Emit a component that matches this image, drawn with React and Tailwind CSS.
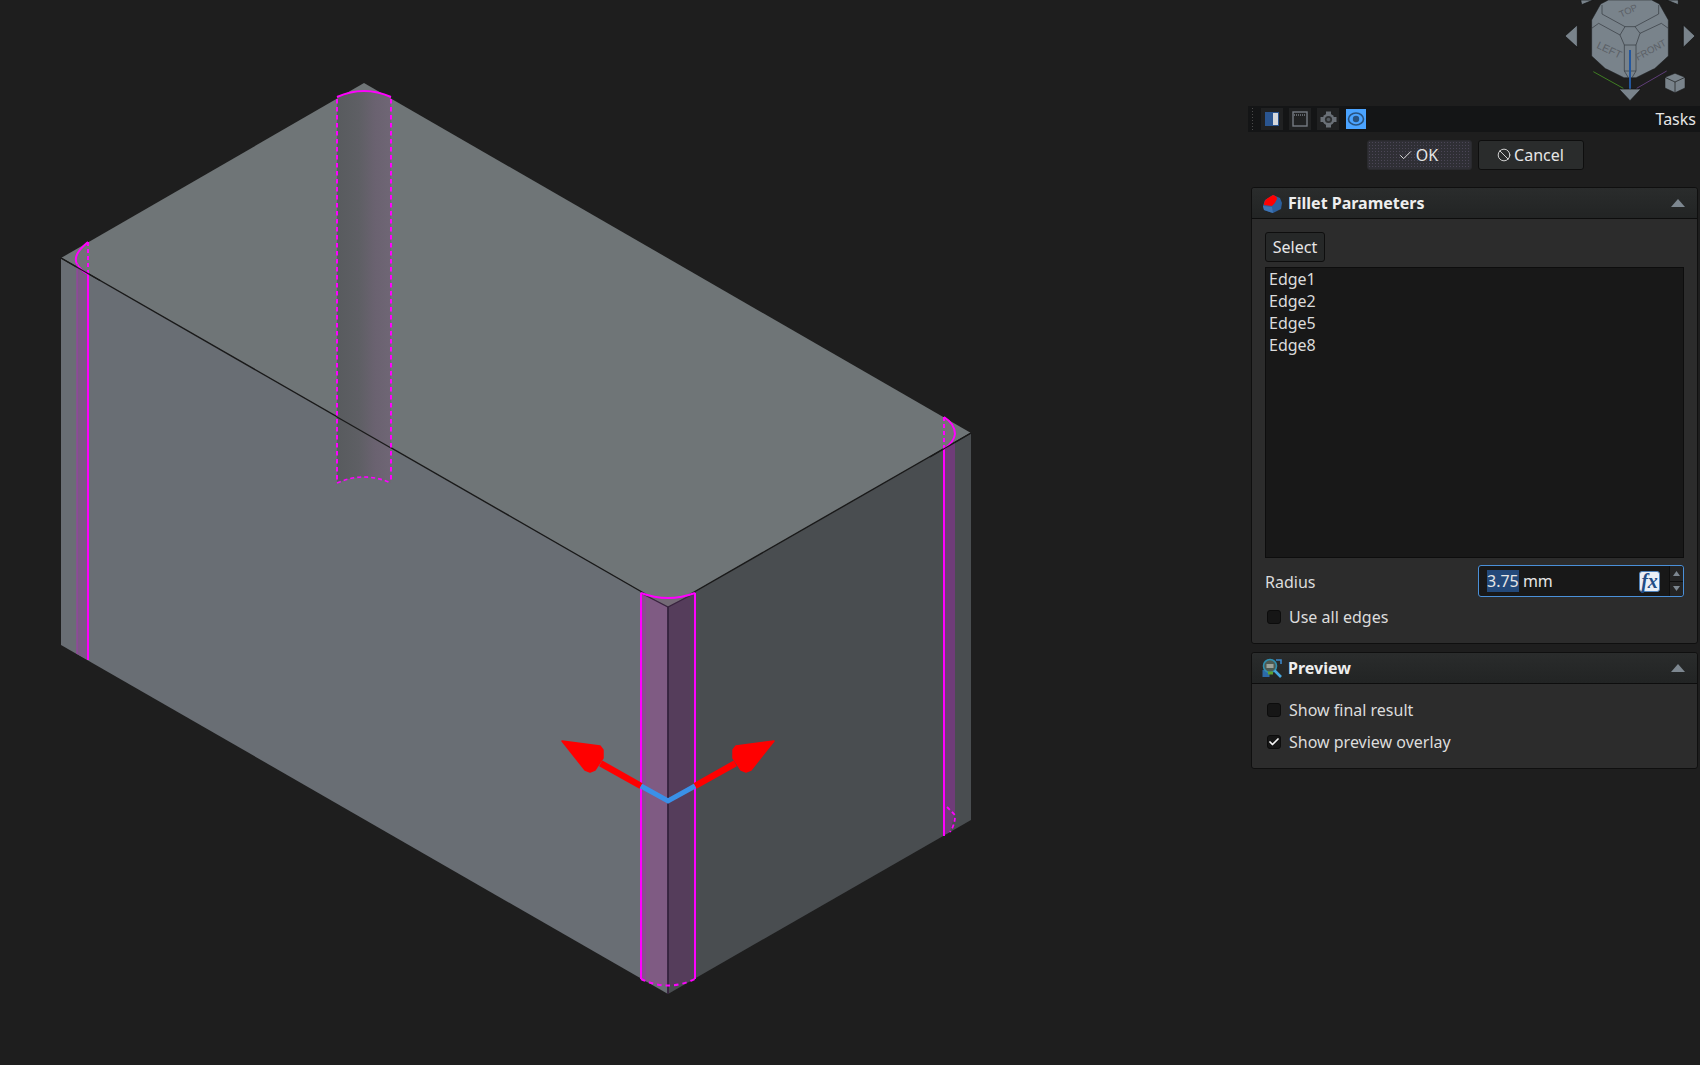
import React from "react";
import { Check, Ban } from "lucide-react";

const FONT = "font-['Noto_Sans',sans-serif]";

function ModelView() {
  return (
    <svg className="block w-[1250px] h-[1065px]" viewBox="0 0 1250 1065">
      <defs>
        <linearGradient id="backStrip" x1="0" x2="1" y1="0" y2="0">
          <stop offset="0" stopColor="#585b5e" />
          <stop offset="0.4" stopColor="#5e5f64" />
          <stop offset="0.7" stopColor="#6a6270" />
          <stop offset="1" stopColor="#6f6675" />
        </linearGradient>
      </defs>
      <polygon points="364,83 971,433 668,607 61,258" fill="#6f7577" />
      <polygon points="61,258 668,607 668,994 61,645" fill="#696e74" />
      <polygon points="668,607 971,433 971,820 668,994" fill="#494d50" />
      <line x1="61" y1="258" x2="668" y2="607" stroke="#1a1a1a" strokeWidth="1.4" />
      <line x1="668" y1="607" x2="971" y2="433" stroke="#1a1a1a" strokeWidth="1.4" />

      {/* back fillet */}
      <path d="M337 97 Q364 85 391 97 L391 483 Q364 471 337 483 Z" fill="url(#backStrip)" />
      <line x1="337" y1="417" x2="391" y2="448" stroke="#1a1a1a" strokeWidth="1.4" />
      <path d="M337 97 Q364 85 391 97" fill="none" stroke="#ff00ff" strokeWidth="2" />
      <path d="M337 483 Q364 471 391 483" fill="none" stroke="#ff00ff" strokeWidth="1.6" strokeDasharray="4 3" />
      <line x1="337" y1="99" x2="337" y2="483" stroke="#ff00ff" strokeWidth="2" strokeDasharray="4.5 3.5" />
      <line x1="391" y1="99" x2="391" y2="483" stroke="#ff00ff" strokeWidth="2" strokeDasharray="4.5 3.5" />

      {/* left fillet */}
      <path d="M88 274 Q77 266 77 258 L77 654 L88 660 Z" fill="#7b5884" />
      <path d="M88 242 Q72 255 77 264 Q80 270 88 274 Z" fill="#727078" />
      <path d="M88 242 Q72 255 77 264 Q80 270 88 274" fill="none" stroke="#ff00ff" strokeWidth="2" />
      <line x1="88" y1="242" x2="88" y2="274" stroke="#ff00ff" strokeWidth="2" strokeDasharray="4 3" />
      <line x1="88" y1="274" x2="88" y2="660" stroke="#ff00ff" strokeWidth="2" />
      <line x1="77" y1="264" x2="77" y2="654" stroke="#a03aaa" strokeWidth="1" />
      <line x1="61" y1="258" x2="100" y2="280.5" stroke="#1a1a1a" strokeWidth="1.4" />

      {/* right fillet */}
      <path d="M944 449 L955 442 L955 812 L950 832 L944 835 Z" fill="#6f3c78" />
      <path d="M944 417 Q955 424 955 434 Q954 442 944 449 Z" fill="#777078" />
      <path d="M944 417 Q955 424 955 434 Q954 442 944 449" fill="none" stroke="#ff00ff" strokeWidth="2" />
      <line x1="944" y1="417" x2="944" y2="448" stroke="#ff00ff" strokeWidth="2" strokeDasharray="4 3" />
      <line x1="944" y1="448" x2="944" y2="836" stroke="#ff00ff" strokeWidth="2" />
      <line x1="930" y1="457" x2="971" y2="433" stroke="#1a1a1a" strokeWidth="1.4" />
      <path d="M947 807 L955 815 Q955 825 950 832" fill="none" stroke="#ff00ff" strokeWidth="1.8" strokeDasharray="4 3" />

      {/* front fillet */}
      <path d="M641 593 Q668 603 695 593 L668 607 Z" fill="#746a76" />
      <path d="M641 593 L668 607 L668 985.5 Q654.5 985.5 641 979 Z" fill="#7f5b83" />
      <path d="M641 593 L646 596 L646 981.5 L641 979 Z" fill="#8c4a92" />
      <path d="M695 593 L668 607 L668 985.5 Q681.5 985.5 695 979 Z" fill="#553d5b" />
      <polyline points="641,593 668,607 695,593" fill="none" stroke="#3a2440" strokeWidth="1.4" />
      <line x1="668" y1="607" x2="668" y2="994" stroke="#35223d" strokeWidth="1.8" />
      <path d="M641 593 Q668 603 695 593" fill="none" stroke="#ff00ff" strokeWidth="2" />
      <line x1="641" y1="593" x2="641" y2="979" stroke="#ff00ff" strokeWidth="2" />
      <line x1="695" y1="593" x2="695" y2="979" stroke="#ff00ff" strokeWidth="2" />
      <path d="M641 979 Q668 992 695 979" fill="none" stroke="#ff00ff" strokeWidth="2" strokeDasharray="4.5 4" />

      {/* manipulator */}
      <line x1="600.7" y1="763.3" x2="641" y2="786" stroke="#ff0000" strokeWidth="6.5" />
      <line x1="735.3" y1="763.3" x2="695" y2="786" stroke="#ff0000" strokeWidth="6.5" />
      <polygon points="562,741 600,746 603,750 603,758 595,770 590,772 585,770" fill="#ff0000" stroke="#ff0000" strokeWidth="1.5" strokeLinejoin="round" />
      <polygon points="774,741 736,746 733,750 733,758 741,770 746,772 751,770" fill="#ff0000" stroke="#ff0000" strokeWidth="1.5" strokeLinejoin="round" />
      <polyline points="641,786 668,801 695,786" fill="none" stroke="#3a90e8" strokeWidth="5" />
    </svg>
  );
}

function NavCube() {
  const line = "#32373c";
  return (
    <svg className="block w-[160px] h-[106px]" viewBox="0 0 480 318">
      <g fill="#79838b" stroke="#0e0e0e" strokeWidth="2">
        <polygon points="112,75 75,108 112,142" />
        <polygon points="430,75 465,108 430,142" />
        <polygon points="122,0 160,0 125,14" />
        <polygon points="380,0 415,0 415,14" />
        <polygon points="237,267 303,267 270,302" />
      </g>
      <polygon
        points="205,0 335,0 358,12 385,60 385,168 345,205 288,233 252,233 195,205 155,168 155,60 182,12"
        fill="#79838b"
        stroke="#1a1c1e"
        strokeWidth="1.5"
      />
      <g fill="none" stroke={line} strokeWidth="2">
        <polygon points="240,105 255,80 285,80 300,100 288,135 253,135" />
        <polyline points="255,80 186,42 186,15" />
        <polyline points="285,80 356,42 356,15" />
        <polyline points="240,105 176,70 155,85" />
        <polyline points="300,100 364,70 385,85" />
        <polyline points="253,135 253,213 265,233" />
        <polyline points="288,135 288,213 276,233" />
        <line x1="253" y1="213" x2="288" y2="213" />
      </g>
      <g fontFamily="'Liberation Sans',sans-serif" fill="#5b6066">
        <text fontSize="28" transform="translate(243,53) rotate(-25)">TOP</text>
        <text fontSize="32" transform="translate(168,143) rotate(25)">LEFT</text>
        <text fontSize="29" transform="translate(293,182) rotate(-28)">FRONT</text>
      </g>
      <line x1="160" y1="215" x2="250" y2="265" stroke="#3f7d22" strokeWidth="3" />
      <line x1="380" y1="213" x2="290" y2="265" stroke="#5e3d78" strokeWidth="3" />
      <line x1="270" y1="150" x2="270" y2="266" stroke="#23579e" strokeWidth="6" />
      <polygon points="375,232 405,220 435,232 435,264 405,278 375,264" fill="#79838b" stroke="#141414" strokeWidth="1.5" />
      <polyline points="375,232 405,246 435,232" fill="none" stroke="#141414" strokeWidth="2" />
      <line x1="405" y1="246" x2="405" y2="278" stroke="#141414" strokeWidth="2" />
    </svg>
  );
}

function ToolTile({ active, children }) {
  return (
    <div className={`w-[22px] h-[22px] flex items-center justify-center ${active ? "bg-[#4aa3ff] border border-[#141516]" : "bg-[#202122]"}`}>
      {children}
    </div>
  );
}

function TaskTabs() {
  return (
    <div className="-ml-[2px] h-[26px] bg-[#141516] flex items-center pl-[3px] pr-[4px]">
      <div className="w-[4px] h-[24px] mr-[6px] bg-[radial-gradient(#4a4a4a_1px,transparent_1px)] bg-[length:3px_3px]" />
      <div className="flex gap-[6px]">
        <ToolTile>
          <svg width="16" height="16" viewBox="0 0 16 16">
            <rect x="1" y="1" width="14" height="14" fill="#2a5590" />
            <rect x="9" y="2" width="5" height="12" fill="#d5d8dc" />
          </svg>
        </ToolTile>
        <ToolTile>
          <svg width="16" height="16" viewBox="0 0 16 16" fill="none" stroke="#757b82" strokeWidth="1.4">
            <rect x="1" y="1" width="14" height="14" />
            <line x1="2" y1="4" x2="14" y2="4" strokeDasharray="1 1" />
          </svg>
        </ToolTile>
        <ToolTile>
          <svg width="17" height="17" viewBox="0 0 17 17">
            <g fill="#6a7077">
              <rect x="6" y="0.5" width="5" height="16" />
              <rect x="0.5" y="6" width="16" height="5" />
            </g>
            <circle cx="8.5" cy="8.5" r="6" fill="#6a7077" />
            <circle cx="8.5" cy="8.5" r="3.6" fill="#2d2f31" />
            <circle cx="8.5" cy="8.5" r="1.8" fill="#555b61" />
          </svg>
        </ToolTile>
        <ToolTile active>
          <svg width="18" height="18" viewBox="0 0 18 18">
            <ellipse cx="9" cy="9" rx="7.5" ry="6" fill="none" stroke="#28527f" strokeWidth="1.6" />
            <circle cx="9" cy="9" r="3.2" fill="#28527f" />
          </svg>
        </ToolTile>
      </div>
      <span className="ml-auto text-[16px] leading-none text-[#e6e6e6]">Tasks</span>
    </div>
  );
}

function DialogButton({ pressed, icon, label, width }) {
  return (
    <button
      className={`${width} h-[30px] rounded-[3px] flex items-center justify-center gap-[3px] text-[16px] text-[#e6e6e6] border ${
        pressed
          ? "bg-[#2f2f35] bg-[radial-gradient(#4b4656_1px,transparent_1px)] bg-[length:3px_3px] border-[#2a2a2e]"
          : "bg-[#2a2c2c] border-[#0e0e0e]"
      }`}
    >
      {icon}
      {label}
    </button>
  );
}

function Caret() {
  return (
    <svg width="14" height="8" viewBox="0 0 14 8" className="ml-auto mr-[12px]">
      <polygon points="7,0 14,8 0,8" fill="#7d8790" />
    </svg>
  );
}

function GroupHeader({ icon, title }) {
  return (
    <div className="h-[31px] flex items-center pl-[10px] border-b border-[#0d0d0d] rounded-t-[3px] bg-gradient-to-b from-[#2a2c2c] to-[#222424]">
      <div className="w-[20px] h-[20px] mr-[6px]">{icon}</div>
      <span className="text-[16px] font-bold text-[#eeeeee]">{title}</span>
      <Caret />
    </div>
  );
}

function CheckRow({ label, checked }) {
  return (
    <div className="flex items-center gap-[8px] h-[20px]">
      <div className="w-[14px] h-[14px] ml-[2px] rounded-[3px] bg-[#161616] border border-[#0c0c0c] flex items-center justify-center">
        {checked && <Check size={12} strokeWidth={3.5} color="#f4f4f4" />}
      </div>
      <span className="text-[16px] text-[#dcdcdc]">{label}</span>
    </div>
  );
}

const FilletIcon = (
  <svg width="20" height="20" viewBox="0 0 20 20">
    <path d="M1 13 L3 7 L11 2 L18 5 L20 10 L19 16 L11 20 L2 17 Z" fill="#2c5f9c" />
    <path d="M2 12 Q2 7 6 5 L11 2 Q15 3 15 6 Q13 11 10 13 L2 12 Z" fill="#ff0000" />
    <path d="M1 13 L10 14 L11 20 L2 17 Z" fill="#3d74b4" />
  </svg>
);

const PreviewIcon = (
  <svg width="20" height="20" viewBox="0 0 20 20">
    <rect x="0.5" y="12" width="7" height="7" fill="#2c6aa8" />
    <circle cx="8" cy="8" r="6.5" fill="#4d5a52" stroke="#2f8fb0" strokeWidth="1.6" />
    <rect x="4.5" y="6" width="7" height="4" fill="#9ba39b" />
    <rect x="6" y="13.5" width="5" height="3" fill="#5ea032" />
    <line x1="12.5" y1="12.5" x2="19" y2="19" stroke="#47a8e0" strokeWidth="2.6" />
    <path d="M14 2 L19 2 L19 6" fill="none" stroke="#3b86c8" strokeWidth="1.6" />
  </svg>
);

function RadiusInput() {
  return (
    <div className="w-[206px] h-[32px] rounded-[3px] border border-[#4a90d9] bg-[#181818] flex items-center">
      <div className="flex-1 flex items-center pl-[8px] text-[16px] leading-[22px] text-[#e6e6e6]">
        <span className="bg-[#23497a] h-[22px]">3.75</span>
        <span>&nbsp;mm</span>
      </div>
      <div className="w-[21px] h-[21px] mr-[9px] rounded-[3px] bg-[#eaeff6] border border-[#4f82bb] flex items-center justify-center font-['Liberation_Serif',serif] italic font-bold text-[20px] leading-none text-[#1f4d86]">
        fx
      </div>
      <div className="w-[14px] h-full border-l border-[#0e0e0e] flex flex-col bg-[#242424] rounded-r-[3px]">
        <div className="flex-1 flex items-center justify-center border-b border-[#0e0e0e]">
          <svg width="7" height="5" viewBox="0 0 7 5"><polygon points="3.5,0 7,5 0,5" fill="#7d8790" /></svg>
        </div>
        <div className="flex-1 flex items-center justify-center">
          <svg width="7" height="5" viewBox="0 0 7 5"><polygon points="0,0 7,0 3.5,5" fill="#7d8790" /></svg>
        </div>
      </div>
    </div>
  );
}

function FilletPanel() {
  return (
    <section className="ml-[1px] mr-[2px] rounded-[3px] border border-[#0f0f0f] bg-[#2c2c2c]">
      <GroupHeader icon={FilletIcon} title="Fillet Parameters" />
      <div className="pt-[13px] px-[13px] h-[424px]">
        <button className="block w-[60px] h-[30px] rounded-[3px] bg-[#262828] border border-[#0e0e0e] text-[16px] text-[#e6e6e6]">
          Select
        </button>
        <div className="mt-[5px] h-[291px] bg-[#181818] border border-[#0d0d0d] pl-[3px] text-[16px] leading-[22px] text-[#dcdcdc]">
          <div>Edge1</div>
          <div>Edge2</div>
          <div>Edge5</div>
          <div>Edge8</div>
        </div>
        <div className="mt-[7px] flex items-center justify-between">
          <span className="pt-[2px] text-[16px] text-[#dcdcdc]">Radius</span>
          <RadiusInput />
        </div>
        <div className="mt-[10px]">
          <CheckRow label="Use all edges" />
        </div>
      </div>
    </section>
  );
}

function PreviewPanel() {
  return (
    <section className="mt-[8px] ml-[1px] mr-[2px] rounded-[3px] border border-[#0f0f0f] bg-[#2c2c2c]">
      <GroupHeader icon={PreviewIcon} title="Preview" />
      <div className="px-[13px] pt-[16px] h-[84px] flex flex-col gap-[12px]">
        <CheckRow label="Show final result" />
        <CheckRow label="Show preview overlay" checked />
      </div>
    </section>
  );
}

export default function App() {
  return (
    <div className={`w-[1700px] h-[1065px] bg-[#1e1e1e] flex overflow-hidden ${FONT}`}>
      <ModelView />
      <aside className="w-[450px] flex flex-col">
        <div className="flex justify-end h-[106px]">
          <NavCube />
        </div>
        <TaskTabs />
        <div className="mt-[8px] flex justify-center gap-[6px]">
          <DialogButton
            pressed
            width="w-[105px]"
            label="OK"
            icon={<Check size={15} strokeWidth={1.5} className="-ml-[2px]" />}
          />
          <DialogButton width="w-[106px]" label="Cancel" icon={<Ban size={14} strokeWidth={1.5} />} />
        </div>
        <div className="mt-[17px]">
          <FilletPanel />
          <PreviewPanel />
        </div>
      </aside>
    </div>
  );
}
